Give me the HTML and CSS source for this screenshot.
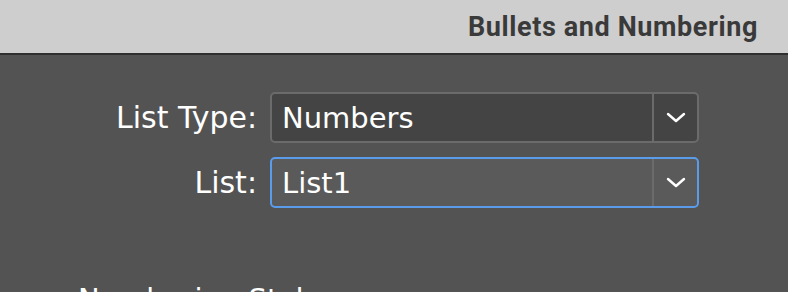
FILE: index.html
```html
<!DOCTYPE html>
<html lang="en">
  <head>
    <meta charset="UTF-8" />
    <title>Bullets and Numbering</title>
    <link rel="stylesheet" href="styles.css">
  </head>
  <body>
    <header class="title-bar">
      <h1>Bullets and Numbering</h1>
    </header>

    <div class="panel">
      <div class="form-grid">
        <label class="field-label">List Type:</label>
        <div class="select">
          <span class="select-value">Numbers</span>
          <span class="select-arrow">
            <svg width="20" height="12" viewBox="0 0 20 12"><path d="M2 2 L10 9 L18 2" fill="none" stroke="#fff" stroke-width="2.4" stroke-linecap="round" stroke-linejoin="round"/></svg>
          </span>
        </div>

        <label class="field-label">List:</label>
        <div class="select focused">
          <span class="select-value">List1</span>
          <span class="select-arrow">
            <svg width="20" height="12" viewBox="0 0 20 12"><path d="M2 2 L10 9 L18 2" fill="none" stroke="#fff" stroke-width="2.4" stroke-linecap="round" stroke-linejoin="round"/></svg>
          </span>
        </div>
      </div>

      <h2 class="section-title">Numbering Style</h2>
    </div>
  </body>
</html>
```
FILE: styles.css
```css
* {
  box-sizing: border-box;
}

body {
  margin: 0;
  padding: 0;
  height: 292px;
  background-color: #535353;
  font-family: "DejaVu Sans", sans-serif;
  color: #fff;
  overflow: hidden;
}

.title-bar {
  height: 55px;
  background-color: #cecece;
  border-bottom: 2px solid #2f2f2f;
  display: flex;
  justify-content: flex-end;
  align-items: center;
  padding-right: 30px;
}

.title-bar h1 {
  margin: 0;
  font-family: Roboto, sans-serif;
  font-weight: bold;
  font-size: 27px;
  color: #3a3a3a;
  letter-spacing: 0.6px;
}

.panel {
  padding-top: 37px;
}

.form-grid {
  display: grid;
  grid-template-columns: 257px 429px;
  grid-auto-rows: 51px;
  column-gap: 13px;
  row-gap: 14px;
  align-items: center;
}

.field-label {
  text-align: right;
  font-size: 30px;
}

.select {
  height: 51px;
  display: flex;
  align-items: stretch;
  border: 2px solid #6b6b6b;
  border-radius: 5px;
  background-color: #444444;
}

.select.focused {
  border-color: #5b9cea;
  background-color: #5a5a5a;
}

.select-value {
  flex: 1;
  display: flex;
  align-items: center;
  padding-left: 10px;
  font-size: 29px;
  border-right: 2px solid #6b6b6b;
}

.select-arrow {
  width: 43px;
  display: flex;
  align-items: center;
  justify-content: center;
}

.section-title {
  margin: 74px 0 0 78px;
  font-weight: normal;
  font-size: 29px;
}
```
